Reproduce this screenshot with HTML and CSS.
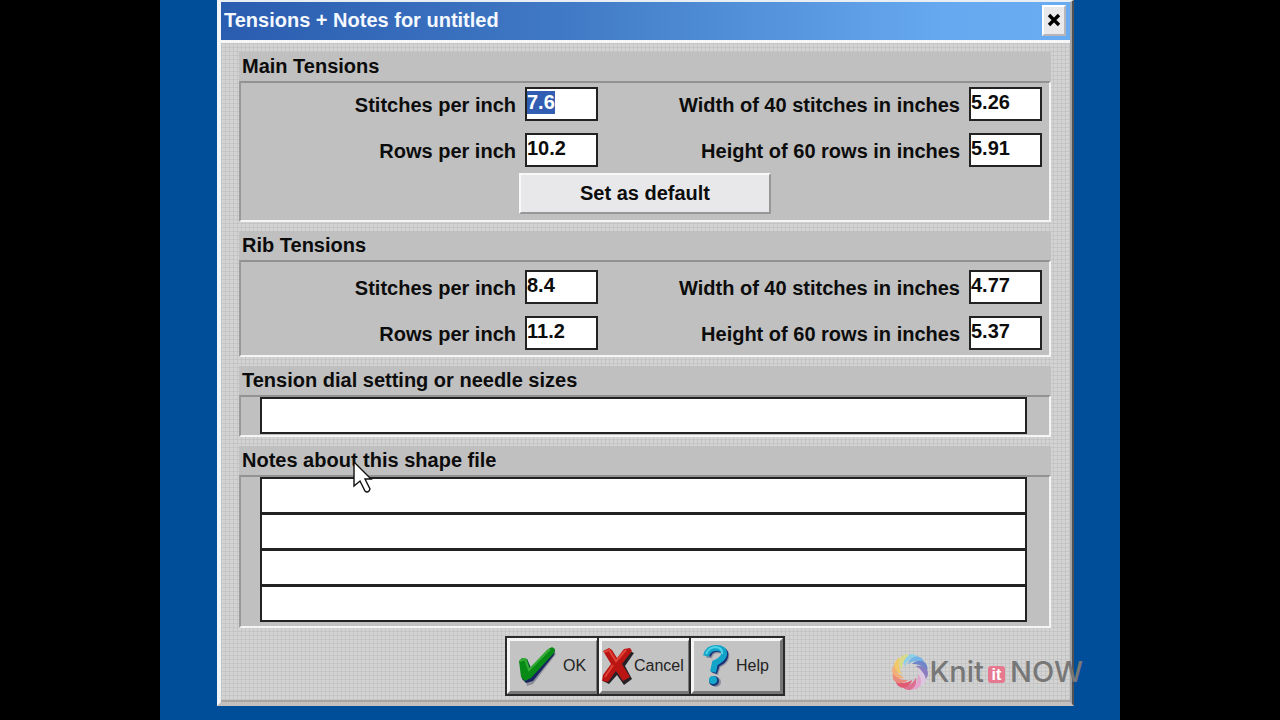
FILE: index.html
```html
<!DOCTYPE html>
<html lang="en">
<head>
<meta charset="utf-8">
<title>Tensions + Notes for untitled</title>
<link rel="stylesheet" href="styles.css">
</head>
<body>
<main class="desktop">
  <form class="dialog">
    <header class="titlebar">
      <h1 class="title">Tensions + Notes for untitled</h1>
      <button class="close" type="button" aria-label="Close">
        <svg width="14" height="14" viewBox="0 0 14 14"><path d="M2 2L12 12M12 2L2 12" stroke="#000" stroke-width="3.4"/></svg>
      </button>
    </header>
    <div class="content">
      <section class="group">
        <h2 class="group-title">Main Tensions</h2>
        <div class="panel tensions">
          <label class="label" for="main-stitches">Stitches per inch</label>
          <input class="field" id="main-stitches" value="7.6">
          <label class="label" for="main-width">Width of 40 stitches in inches</label>
          <input class="field" id="main-width" value="5.26">
          <label class="label" for="main-rows">Rows per inch</label>
          <input class="field" id="main-rows" value="10.2">
          <label class="label" for="main-height">Height of 60 rows in inches</label>
          <input class="field" id="main-height" value="5.91">
          <button class="default-button" type="button">Set as default</button>
        </div>
      </section>
      <section class="group">
        <h2 class="group-title">Rib Tensions</h2>
        <div class="panel tensions rib">
          <label class="label" for="rib-stitches">Stitches per inch</label>
          <input class="field" id="rib-stitches" value="8.4">
          <label class="label" for="rib-width">Width of 40 stitches in inches</label>
          <input class="field" id="rib-width" value="4.77">
          <label class="label" for="rib-rows">Rows per inch</label>
          <input class="field" id="rib-rows" value="11.2">
          <label class="label" for="rib-height">Height of 60 rows in inches</label>
          <input class="field" id="rib-height" value="5.37">
        </div>
      </section>
      <section class="group">
        <h2 class="group-title" id="dial-title">Tension dial setting or needle sizes</h2>
        <div class="panel lines">
          <input class="line" aria-labelledby="dial-title">
        </div>
      </section>
      <section class="group">
        <h2 class="group-title" id="notes-title">Notes about this shape file</h2>
        <div class="panel lines notes">
          <input class="line" aria-labelledby="notes-title">
          <input class="line" aria-labelledby="notes-title">
          <input class="line" aria-labelledby="notes-title">
          <input class="line" aria-labelledby="notes-title">
        </div>
      </section>
      <footer class="actions">
        <button class="action ok" type="button">
          <svg width="40" height="42" viewBox="0 0 40 42">
            <path d="M5 19L11 16L14 25L35 5L39 9L16 39L10 41Z" fill="#8d8d98"/>
            <path d="M4 17L10 14L14 23L33 3L38 5L37 10L16 36L9 38L5 34Z" fill="#17245f"/>
            <path d="M2 16L5 13L10 14L13 23L30 5L35 2L38 4L37 8L14 33L8 36L4 32Z" fill="#078b16"/>
            <path d="M3 16L8 14L12 25L33 4" fill="none" stroke="#37ad36" stroke-width="2"/>
          </svg>
          <span class="action-text">OK</span>
        </button>
        <button class="action cancel" type="button">
          <svg width="32" height="40" viewBox="1 0 32 40">
            <path d="M6 5L15 14L26 4L33 7L24 20L31 33L23 39L16 29L8 38L2 35L11 20Z" fill="#242226"/>
            <path d="M2 5L8 2L11 4L16 12L23 3L29 2L31 5L21 18L29 31L22 35L15 25L7 36L1 35L2 29L10 18Z" fill="#b91513"/>
            <path d="M3 6L8 4L15 15L25 4M4 31L12 19" fill="none" stroke="#e14236" stroke-width="2"/>
          </svg>
          <span class="action-text">Cancel</span>
        </button>
        <button class="action help" type="button">
          <svg width="28" height="44" viewBox="0 0 28 44">
            <g fill="none" stroke-width="6">
              <path d="M6 14Q7 6 16 6Q25 7 23 14Q22 18 15 21L12 30" stroke="#91919e"/>
              <path d="M5 12Q7 4 15 5Q24 6 22 13Q21 17 14 20L11 29" stroke="#172f79"/>
              <path d="M3 12Q5 4 13 4Q22 4 21 11Q19 16 12 19L10 28" stroke="#12a4c8"/>
              <path d="M3 10Q6 3 13 3Q20 4 19 10" stroke="#53d3e6" stroke-width="2"/>
            </g>
            <circle cx="13" cy="38" r="5" fill="#8d8d9d"/><circle cx="11" cy="37" r="5" fill="#17387d"/><circle cx="10" cy="36" r="4" fill="#16a8cb"/>
          </svg>
          <span class="action-text">Help</span>
        </button>
      </footer>
    </div>
  </form>
  <div class="watermark">
    <svg width="38" height="36" viewBox="-19 -18 38 36">
      <defs><path id="petal" d="M-4 -7Q-3 -15 4 -17Q10 -17 12 -12Q2 -14 -4 -7Z"/></defs>
      <g transform="rotate(-18)">
        <use href="#petal" fill="#8fd0e8"/>
        <use href="#petal" fill="#74b4e6" transform="rotate(30)"/>
        <use href="#petal" fill="#6f86c8" transform="rotate(60)"/>
        <use href="#petal" fill="#8a7dc0" transform="rotate(90)"/>
        <use href="#petal" fill="#dcc6e2" transform="rotate(120)"/>
        <use href="#petal" fill="#e3a5cd" transform="rotate(150)"/>
        <use href="#petal" fill="#dd6f91" transform="rotate(180)"/>
        <use href="#petal" fill="#e05a73" transform="rotate(210)"/>
        <use href="#petal" fill="#e98a7c" transform="rotate(240)"/>
        <use href="#petal" fill="#f2ae78" transform="rotate(270)"/>
        <use href="#petal" fill="#f0ca6a" transform="rotate(300)"/>
        <use href="#petal" fill="#d9d98a" transform="rotate(330)"/>
      </g>
    </svg>
    <span class="brand">Knit</span><span class="brand-it">it</span><span class="brand">NOW</span>
  </div>
  <svg class="cursor" width="20" height="34" viewBox="0 0 20 34">
    <path d="M1 1V25L7 20L12 30Q14 32 16 30L17 28L12 18H18Z" fill="#fff" stroke="#111" stroke-width="1.4"/>
  </svg>
</main>
<script src="main.js"></script>
</body>
</html>
```
FILE: styles.css
```css
* { box-sizing: border-box; }
body {
  margin: 0;
  background: #000;
  color: #0c0c0c;
  font: bold 20px/24px "Liberation Sans", Arial, sans-serif;
}
button, input { font: inherit; color: inherit; margin: 0; border-radius: 0; }
h1, h2 { margin: 0; font: inherit; }

.desktop {
  position: relative;
  min-height: 100vh;
  margin: 0 12.5%;
  padding: 0 46px 14px 57px;
  background: #004d99;
}
.dialog {
  border: solid;
  border-width: 2px 4px 4px;
  border-color: #e8eef2 #a5a5a8 #c4c0c0 #f2f6f6;
  border-right-style: ridge;
}
.titlebar {
  display: flex;
  align-items: center;
  justify-content: space-between;
  height: 38px;
  padding: 0 4px 2px 3px;
  background: linear-gradient(90deg, #2a5caf, #4079c5 40%, #66a9f0 85%, #69acf2);
}
.title { color: #f4f8ff; }
.close {
  display: flex;
  align-items: center;
  justify-content: center;
  width: 24px;
  height: 31px;
  padding: 0;
  border: 2px solid;
  border-color: #fff #b5b5ba #b5b5ba #fff;
  background: #e9e9ec;
}
.content {
  display: flex;
  flex-direction: column;
  gap: 9px;
  padding: 9px 19px 4px 18px;
  border-top: 3px solid #f4f6f8;
  border-bottom: 2px solid #aaa4a4;
  background-color: #d3d3d3;
  background-image:
    linear-gradient(90deg, #bcbcbc88 1px, transparent 1px),
    linear-gradient(#bcbcbc88 1px, transparent 1px);
  background-size: 4px 4px;
}
.group { background: #c0c0c0; }
.group-title { padding: 2px 3px 3px; }
.panel {
  border: 2px solid;
  border-color: #929292 #f4f4f4 #f4f4f4 #999;
}
.tensions {
  display: grid;
  grid-template-columns: 275px 73px 1fr 73px;
  column-gap: 9px;
  row-gap: 12px;
  padding: 4px 7px 6px 0;
}
.rib { padding: 8px 7px 5px 0; }
.label {
  padding-top: 6px;
  text-align: right;
  white-space: nowrap;
}
.field {
  width: 100%;
  height: 34px;
  padding: 0 0 4px;
  border: 2px solid #222;
  background: #fff;
  outline: 0;
}
.field::selection { background: #315eb2; color: #fff; }
.default-button {
  grid-column: 1 / -1;
  justify-self: center;
  width: 252px;
  height: 41px;
  margin: -6px 0 0 7px;
  padding: 0 0 2px;
  border: 2px solid;
  border-color: #f8f8f8 #979797 #979797 #f8f8f8;
  background: #e8e8ea;
}
.lines {
  display: flex;
  flex-direction: column;
  padding: 0 22px 1px 19px;
}
.line {
  width: 100%;
  height: 37px;
  padding: 0 2px;
  border: 2px solid #222;
  background: #fff;
}
.line + .line { margin-top: -1px; }
.notes { padding-bottom: 4px; }

.actions {
  display: flex;
  align-self: center;
  margin-top: -1px;
  border: 2px solid #2b2b2b;
}
.action {
  display: flex;
  align-items: center;
  width: 92px;
  height: 56px;
  padding: 0;
  border: 3px solid;
  border-color: #f4f4f4 #777 #777 #f4f4f4;
  background: #c3c3c3;
  color: #222;
  font: 16px/20px "Liberation Sans", Arial, sans-serif;
}
.action + .action { box-shadow: -2px 0 #2b2b2b; }
.ok { gap: 6px; padding-left: 7px; }
.help { gap: 5px; padding-left: 9px; }

.watermark {
  position: absolute;
  right: 37px;
  bottom: 30px;
  display: flex;
  align-items: center;
  color: #777;
  font: 500 29px/36px Inter, "Liberation Sans", sans-serif;
}
.brand-it {
  width: 17px;
  margin: 4px 5px 0 4px;
  border-radius: 3px;
  background: #e6798f;
  color: #fff;
  font: bold 16px/17px "Liberation Sans", Arial, sans-serif;
  text-align: center;
}
.cursor { position: absolute; left: 193px; top: 461px; }
```
FILE: main.js
```js
document.getElementById("main-stitches").select();
```
